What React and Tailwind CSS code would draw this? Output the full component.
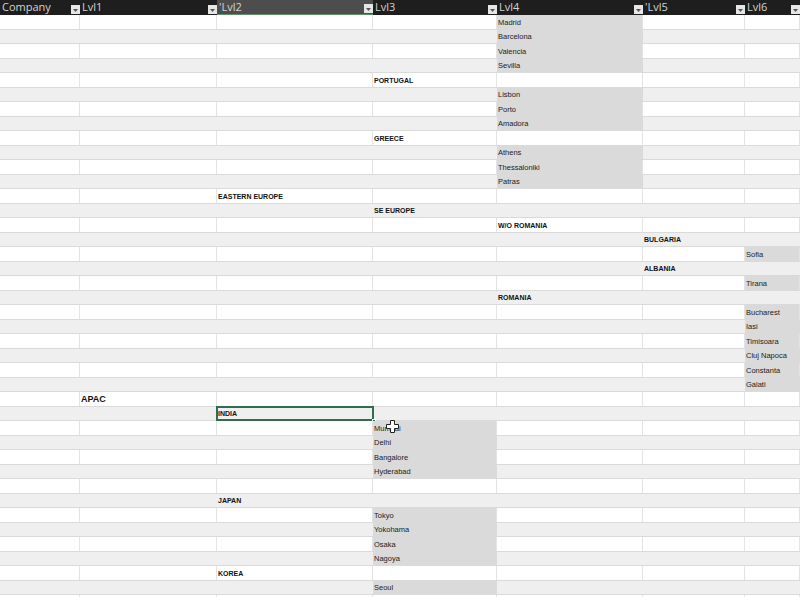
import React from "react";

const COLS = [
  { key: "company", label: "Company", w: "w-[80px]" },
  { key: "l1", label: "Lvl1", w: "w-[137px]" },
  { key: "l2", label: "'Lvl2", w: "w-[156px]", active: true },
  { key: "l3", label: "Lvl3", w: "w-[124px]" },
  { key: "l4", label: "Lvl4", w: "w-[146px]" },
  { key: "l5", label: "'Lvl5", w: "w-[102px]" },
  { key: "l6", label: "Lvl6", w: "flex-1" },
];

// [column index, text, kind] kind: "b" bold heading, "c" leaf city, "a" top level
const ROWS = [
  [4, "Madrid", "c"],
  [4, "Barcelona", "c"],
  [4, "Valencia", "c"],
  [4, "Sevilla", "c"],
  [3, "PORTUGAL", "b"],
  [4, "Lisbon", "c"],
  [4, "Porto", "c"],
  [4, "Amadora", "c"],
  [3, "GREECE", "b"],
  [4, "Athens", "c"],
  [4, "Thessaloniki", "c"],
  [4, "Patras", "c"],
  [2, "EASTERN EUROPE", "b"],
  [3, "SE EUROPE", "b"],
  [4, "W/O ROMANIA", "b"],
  [5, "BULGARIA", "b"],
  [6, "Sofia", "c"],
  [5, "ALBANIA", "b"],
  [6, "Tirana", "c"],
  [4, "ROMANIA", "b"],
  [6, "Bucharest", "c"],
  [6, "Iasi", "c"],
  [6, "Timisoara", "c"],
  [6, "Cluj Napoca", "c"],
  [6, "Constanta", "c"],
  [6, "Galati", "c"],
  [1, "APAC", "a"],
  [2, "INDIA", "b", true],
  [3, "Mumbai", "c"],
  [3, "Delhi", "c"],
  [3, "Bangalore", "c"],
  [3, "Hyderabad", "c"],
  [null, "", ""],
  [2, "JAPAN", "b"],
  [3, "Tokyo", "c"],
  [3, "Yokohama", "c"],
  [3, "Osaka", "c"],
  [3, "Nagoya", "c"],
  [2, "KOREA", "b"],
  [3, "Seoul", "c"],
  [null, "", ""],
];

const TEXT = {
  a: "text-[9px] font-bold text-[#111]",
  b: "text-[7px] font-bold text-[#111]",
  c: "text-[7.5px] text-[#1a1a1a]",
};

function FilterButton() {
  return (
    <span className="mb-[1px] flex h-[9px] w-[9px] shrink-0 items-end justify-center self-end bg-[#e6e6e6] pb-[2px]">
      <svg width="5" height="3" viewBox="0 0 5 3">
        <path d="M0 0 H5 L2.5 3 Z" fill="#555" />
      </svg>
    </span>
  );
}

function Cursor() {
  return (
    <svg
      className="pointer-events-none absolute left-[13px] top-[-1px]"
      width="13"
      height="13"
      viewBox="0 0 13 13"
    >
      <path
        d="M4.5 0.5 H8.5 V4.5 H12.5 V8.5 H8.5 V12.5 H4.5 V8.5 H0.5 V4.5 H4.5 Z"
        fill="#fff"
        stroke="#222"
        strokeWidth="1"
      />
    </svg>
  );
}

export default function App() {
  return (
    <div
      className="h-[597px] w-[800px] overflow-hidden bg-white"
      style={{ fontFamily: '"Liberation Sans", Arial, sans-serif' }}
    >
      <div className="flex h-[15px] bg-[#1e1e1e]">
        {COLS.map((c) => (
          <div
            key={c.key}
            className={`flex ${c.w} h-full justify-between pl-[2px] ${
              c.active ? "border-b border-[#5f8f6c] bg-[#4d4d4d]" : ""
            }`}
          >
            <span
              className="text-[11px] leading-[13px] text-[#d4d4d4]"
              style={{ fontFamily: '"Open Sans", "Noto Sans", sans-serif' }}
            >
              {c.label}
            </span>
            <FilterButton />
          </div>
        ))}
      </div>

      {ROWS.map(([col, text, kind, selected], i) => {
        const grey = i % 2 === 1;
        return (
          <div
            key={i}
            className={`flex h-[14.5px] border-b border-[#dadada] ${grey ? "bg-[#efefef]" : "bg-white"}`}
          >
            {COLS.map((c, ci) => {
              const has = ci === col;
              const city = has && kind === "c";
              return (
                <div
                  key={c.key}
                  className={`relative flex ${c.w} h-full items-center pl-[1px] pt-[1px] ${
                    grey ? "" : "border-r border-[#e3e3e3]"
                  } ${city ? "bg-[#dadada]" : ""}`}
                >
                  {has && <span className={`whitespace-nowrap leading-none ${TEXT[kind]}`}>{text}</span>}
                  {has && text === "Mumbai" && <Cursor />}
                  {has && selected && (
                    <>
                      <div className="pointer-events-none absolute inset-[-1px] border-2 border-[#2e6e4a]" />
                      <div className="absolute bottom-[-3px] right-[-3px] h-[4px] w-[4px] border border-white bg-[#2e6e4a]" />
                    </>
                  )}
                </div>
              );
            })}
          </div>
        );
      })}
    </div>
  );
}
